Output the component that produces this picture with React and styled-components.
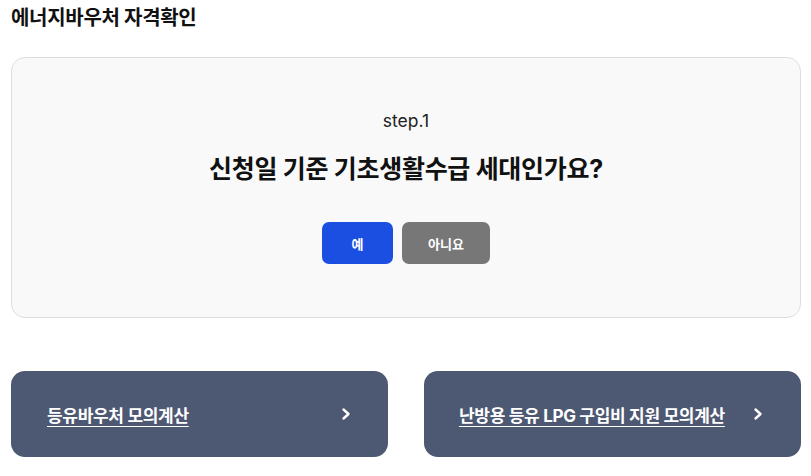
import React from "react";
import styled, { createGlobalStyle } from "styled-components";

const GlobalStyle = createGlobalStyle`
  body {
    margin: 0;
    background: #ffffff;
    font-family: Inter, "Noto Sans CJK KR", sans-serif;
    color: #111;
  }
`;

const Page = styled.div`
  padding: 4px 10px 0 11px;
`;

const Title = styled.h2`
  margin: 0;
  font-size: 20px;
  font-weight: 700;
  line-height: 28px;
  letter-spacing: -0.3px;
`;

const QuestionCard = styled.section`
  margin-top: 25px;
  background: #f9f9f9;
  border: 1px solid #dedede;
  border-radius: 14px;
  padding: 52px 0 53px;
  display: flex;
  flex-direction: column;
  align-items: center;
`;

const Step = styled.p`
  margin: 0;
  font-size: 17.5px;
  line-height: 22px;
  color: #222;
`;

const Question = styled.h3`
  margin: 20px 0 0;
  font-size: 25px;
  line-height: 34px;
  font-weight: 700;
  letter-spacing: -0.3px;
`;

const Buttons = styled.div`
  margin-top: 36px;
  display: flex;
  gap: 9px;
`;

const Choice = styled.button`
  height: 42px;
  width: ${({ $w }) => $w}px;
  border: none;
  border-radius: 7px;
  background: ${({ $primary }) => ($primary ? "#1b4fe1" : "#777777")};
  color: #fff;
  font-family: inherit;
  font-size: 13px;
  font-weight: 700;
  cursor: pointer;
`;

const LinkRow = styled.div`
  margin-top: 53px;
  display: grid;
  grid-template-columns: 1fr 1fr;
  gap: 36px;
`;

const LinkCard = styled.a`
  height: 86px;
  box-sizing: border-box;
  background: #4d5873;
  border-radius: 14px;
  display: flex;
  align-items: center;
  justify-content: space-between;
  padding: 0 ${({ $pr }) => $pr}px 0 ${({ $pl }) => $pl}px;
  color: #fff;
  cursor: pointer;
`;

const LinkText = styled.span`
  font-size: 17px;
  font-weight: 700;
  text-decoration: underline;
  text-underline-offset: 4px;
  text-decoration-thickness: 1px;
  letter-spacing: -0.3px;
`;

function Chevron() {
  return (
    <svg width="12" height="14" viewBox="0 0 12 14" fill="none">
      <polyline
        points="3.5,2.5 8.5,7 3.5,11.5"
        stroke="#fff"
        strokeWidth="2.4"
        strokeLinecap="round"
        strokeLinejoin="round"
      />
    </svg>
  );
}

export default function App() {
  return (
    <>
      <GlobalStyle />
      <Page>
        <Title>에너지바우처 자격확인</Title>
        <QuestionCard>
          <Step>step.1</Step>
          <Question>신청일 기준 기초생활수급 세대인가요?</Question>
          <Buttons>
            <Choice $primary $w={71}>예</Choice>
            <Choice $w={88}>아니요</Choice>
          </Buttons>
        </QuestionCard>
        <LinkRow>
          <LinkCard $pl={36} $pr={36}>
            <LinkText>등유바우처 모의계산</LinkText>
            <Chevron />
          </LinkCard>
          <LinkCard $pl={35} $pr={37}>
            <LinkText>난방용 등유 LPG 구입비 지원 모의계산</LinkText>
            <Chevron />
          </LinkCard>
        </LinkRow>
      </Page>
    </>
  );
}
